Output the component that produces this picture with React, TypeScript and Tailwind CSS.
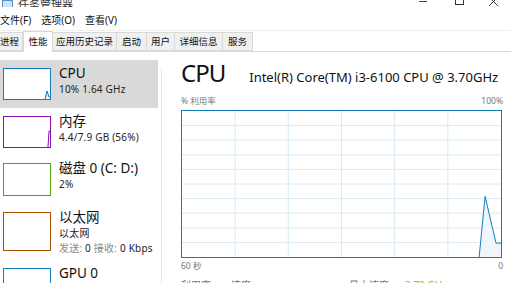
import React from "react";

const font = '"Noto Sans", "Noto Sans CJK SC", sans-serif';

type Item = {
  name: string;
  lines: React.ReactNode[];
  color: string;
  h: number;
  th: number;
  sel?: boolean;
  spark?: React.ReactNode;
};

function Thumb({ color, h, children }: { color: string; h: number; children?: React.ReactNode }) {
  return (
    <div className="relative w-[48px] shrink-0 border bg-white" style={{ borderColor: color, height: h }}>
      {children}
    </div>
  );
}

export default function App() {
  const items: Item[] = [
    {
      name: "CPU",
      lines: ["10% 1.64 GHz"],
      color: "#117dbb",
      h: 48,
      th: 32,
      sel: true,
      spark: (
        <svg className="absolute inset-0" width="46" height="30" viewBox="0 0 46 30">
          <polyline points="41,30 43,22 45,28 46,28" fill="#dcecf6" stroke="#117dbb" strokeWidth="1" />
        </svg>
      ),
    },
    {
      name: "内存",
      lines: ["4.4/7.9 GB (56%)"],
      color: "#8b12ae",
      h: 47,
      th: 32,
      spark: (
        <svg className="absolute inset-0" width="46" height="30" viewBox="0 0 46 30">
          <polyline points="44,30 45,14 46,14" fill="#f0dcf5" stroke="#8b12ae" strokeWidth="1" />
        </svg>
      ),
    },
    { name: "磁盘 0 (C: D:)", lines: ["2%"], color: "#4da60c", h: 49, th: 33 },
    {
      name: "以太网",
      lines: [
        "以太网",
        <span key="a">
          <span className="text-[#8a8a8a]">发送: </span>0 <span className="text-[#8a8a8a]">接收: </span>0 Kbps
        </span>,
      ],
      color: "#a74f01",
      h: 56,
      th: 39,
    },
    { name: "GPU 0", lines: ["Intel(R) HD Graphics 530"], color: "#117dbb", h: 52, th: 32 },
  ];

  const tabs: [string, number][] = [
    ["进程", 23],
    ["性能", 30],
    ["应用历史记录", 64],
    ["启动", 30],
    ["用户", 28],
    ["详细信息", 48],
    ["服务", 30],
  ];

  const vlines = [1, 2, 3, 4, 5].map((i) => (i * 321) / 6);
  const hlines = [1, 2, 3, 4, 5, 6, 7, 8, 9].map((i) => (i * 147) / 10);

  return (
    <div className="h-[283px] w-[511px] overflow-hidden bg-white text-black" style={{ fontFamily: font }}>
      {/* title bar */}
      <div className="flex h-[7px] items-end overflow-hidden">
        <div className="mb-[-5px] ml-[2px] flex items-center gap-[5px] text-[11px] leading-[14px] text-[#333]">
          <span className="inline-block h-[10px] w-[11px] border border-[#5a8fc7] bg-[#cfe3f5]" />
          <span>任务管理器</span>
        </div>
        <div className="ml-auto flex h-[7px] items-start">
          <div className="flex w-[36px] justify-center pt-[1px]">
            <div className="h-[1px] w-[8px] bg-[#444]" />
          </div>
          <div className="flex w-[36px] justify-center">
            <div className="mt-[-4px] h-[9px] w-[9px] border border-[#333]" />
          </div>
          <div className="flex w-[34px] justify-center overflow-hidden">
            <svg width="10" height="7" viewBox="0 0 10 7">
              <path d="M0 -3 L9 6 M9 -3 L0 6" stroke="#333" strokeWidth="1" />
            </svg>
          </div>
        </div>
      </div>
      {/* menu bar */}
      <div className="flex h-[23px] items-center gap-[10px] pt-[2px] text-[10px] leading-none text-[#111]">
        <span>文件(F)</span>
        <span>选项(O)</span>
        <span>查看(V)</span>
      </div>
      <div className="h-px bg-[#eeeeee]" />
      {/* tabs */}
      <div className="flex h-[21px] items-end border-b border-[#d9d9d9] text-[9.5px] leading-none text-[#111]">
        {tabs.map(([t, w], i) =>
          i === 1 ? (
            <div
              key={t}
              className="z-10 mb-[-1px] flex h-[21px] shrink-0 items-center justify-center border border-b-0 border-[#d9d9d9] bg-white"
              style={{ width: w }}
            >
              {t}
            </div>
          ) : (
            <div
              key={t}
              className={`flex h-[19px] shrink-0 items-center border-y border-r border-[#d9d9d9] bg-[#f0f0f0] ${
                i === 0 ? "justify-start" : "justify-center"
              }`}
              style={{ width: w }}
            >
              {t}
            </div>
          )
        )}
      </div>
      {/* content */}
      <div className="flex">
        <div className="w-[158px] shrink-0 pt-[8px]">
          {items.map((it) => (
            <div
              key={it.name}
              className={`flex gap-[8px] pl-[3px] pt-[8px] ${it.sel ? "bg-[#d9d9d9]" : ""}`}
              style={{ height: it.h }}
            >
              <Thumb color={it.color} h={it.th}>
                {it.spark}
              </Thumb>
              <div className="flex flex-col">
                <div className="mt-[-4px] whitespace-nowrap text-[13.5px] leading-[18px] text-[#111]">{it.name}</div>
                {it.lines.map((l, k) => (
                  <div key={k} className="whitespace-nowrap text-[10px] leading-[15px] tracking-[0.2px] text-[#222]">
                    {l}
                  </div>
                ))}
              </div>
            </div>
          ))}
        </div>
        <div className="ml-[3px] mt-[17px] h-[240px] w-px bg-[#e6e6e6]" />
        <div className="flex-1 pl-[19px] pr-[8px]">
          <div className="flex items-end gap-[24px] pt-[6px]">
            <span className="text-[24px] leading-[30px] tracking-[-1px] text-[#111]">CPU</span>
            <span className="whitespace-nowrap pb-[3px] text-[13px] leading-[16px] text-[#111]">
              Intel(R) Core(TM) i3-6100 CPU @ 3.70GHz
            </span>
          </div>
          <div className="mt-[7px] flex justify-between text-[8.5px] leading-[12px] text-[#777]">
            <span>% 利用率</span>
            <span>100%</span>
          </div>
          <div className="relative mt-[3px] h-[148px] w-[321px] border border-[#117dbb]">
            <svg className="absolute inset-0" width="319" height="146" viewBox="0 0 321 147" preserveAspectRatio="none">
              {vlines.map((x) => (
                <line key={x} x1={x} y1={0} x2={x} y2={147} stroke="#d9eaf4" strokeWidth="1" />
              ))}
              {hlines.map((y) => (
                <line key={y} x1={0} y1={y} x2={321} y2={y} stroke="#d9eaf4" strokeWidth="1" />
              ))}
              <polygon points="299,147 305,86 316,133 321,133 321,147" fill="#eef5fb" />
              <polyline points="299,147 305,86 316,133 321,133" fill="none" stroke="#117dbb" strokeWidth="1" />
            </svg>
          </div>
          <div className="mt-[2px] flex justify-between text-[8.5px] leading-[12px] text-[#777]">
            <span>60 秒</span>
            <span>0</span>
          </div>
          <div className="mt-[7px] flex text-[10px] leading-[12px] text-[#777]">
            <span className="w-[50px]">利用率</span>
            <span className="w-[118px]">速度</span>
            <span className="w-[56px]">最大速度:</span>
            <span className="text-[#c9a31a]">3.70 GHz</span>
          </div>
        </div>
      </div>
    </div>
  );
}
